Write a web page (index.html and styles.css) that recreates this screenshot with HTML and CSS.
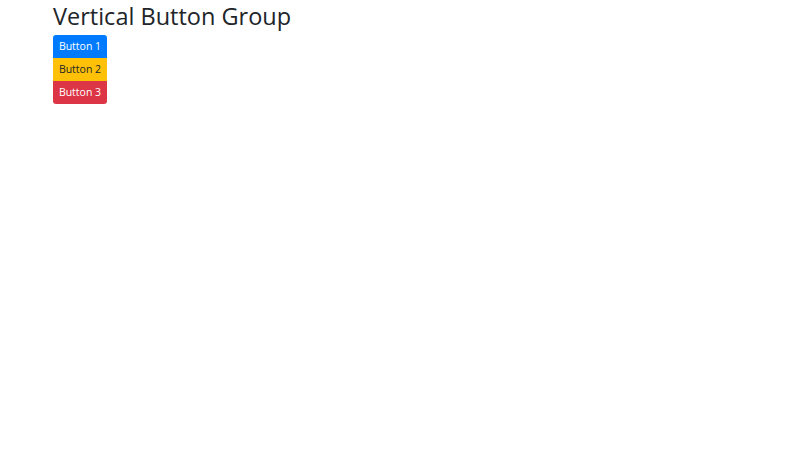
FILE: index.html
```html
<!DOCTYPE html>
<html lang="en">
<head>
    <meta charset="UTF-8">
    <meta name="viewport" content="width=device-width, initial-scale=1.0">
    <link rel="stylesheet" href="styles.css">
    <title>Vertical Button Group</title>
</head>
<body>
    <main class="container">
        <h1 class="title">Vertical Button Group</h1>
        <div class="btn-group-vertical">
            <button class="btn btn-blue">Button 1</button>
            <button class="btn btn-yellow">Button 2</button>
            <button class="btn btn-red">Button 3</button>
        </div>
    </main>
</body>
</html>
```

FILE: styles.css
```css
* {
 margin: 0;
 padding: 0;
 box-sizing: border-box;
}

body {
 font-family: "Open Sans", "Noto Sans", sans-serif;
 color: #212529;
 background-color: #fff;
}

.container {
 padding: 0 53px;
}

.title {
 font-size: 23.5px;
 font-weight: 400;
 line-height: 32px;
 margin-bottom: 3px;
}

.btn-group-vertical {
 display: flex;
 flex-direction: column;
 width: 54px;
}

.btn {
 height: 23px;
 border: none;
 font-family: inherit;
 font-size: 10.5px;
 line-height: 23px;
 color: #fff;
}

.btn-blue {
 background-color: #007bff;
 border-radius: 3px 3px 0 0;
}

.btn-yellow {
 background-color: #ffc107;
 color: #212529;
}

.btn-red {
 background-color: #dc3545;
 border-radius: 0 0 3px 3px;
}
```
